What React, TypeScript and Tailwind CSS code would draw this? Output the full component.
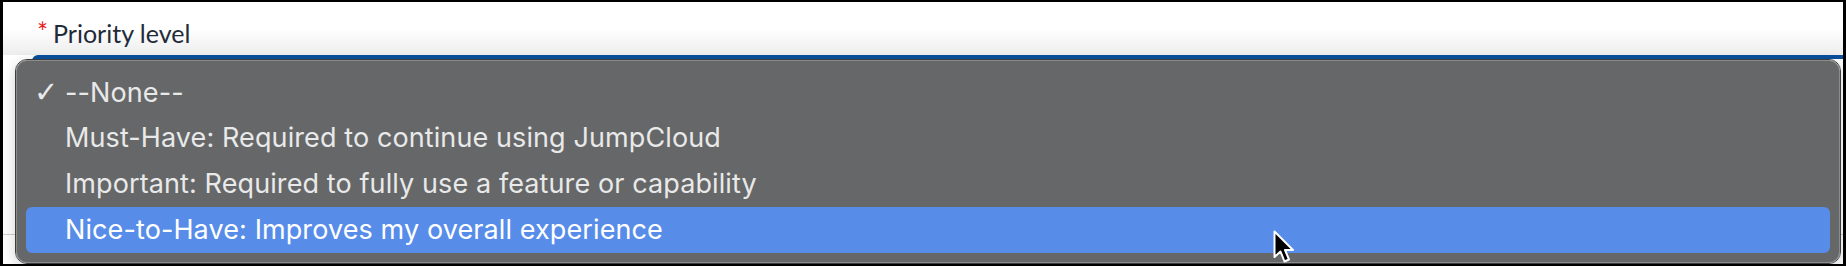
const options = [
  "--None--",
  "Must-Have: Required to continue using JumpCloud",
  "Important: Required to fully use a feature or capability",
  "Nice-to-Have: Improves my overall experience",
];

function Cursor() {
  return (
    <svg
      className="absolute left-[1270px] top-[228px]"
      width="24"
      height="36"
      viewBox="0 0 24 36"
    >
      <path
        d="M1.5 1.5 L1.5 27 L7.5 21.5 L11.5 31.5 L16 29.5 L12 20 L20 20 Z"
        fill="#000"
        stroke="#fff"
        strokeWidth="2"
        strokeLinejoin="round"
      />
    </svg>
  );
}

function OptionMenu({ selected, hovered }: { selected: number; hovered: number }) {
  return (
    <div className="absolute left-[12px] top-[57px] w-[1826px] h-[205px] rounded-[12px] border border-[#3c3c3c] shadow-[0_4px_14px_rgba(0,0,0,0.18)]">
      <div className="flex h-full w-full flex-col rounded-[11px] border border-[#8a8b8b] bg-[#656768] p-[9px] font-['Inter','Noto_Sans',sans-serif] text-[27px] tracking-[0.1px]">
        {options.map((o, i) => (
          <div
            key={o}
            className={
              i === hovered
                ? "flex h-[46px] items-center rounded-[6px] bg-[#578de9] text-white"
                : "flex h-[46px] items-center text-[#e9e9e9]"
            }
          >
            <span className="w-[39px] pl-[8px] font-['DejaVu_Sans',sans-serif] text-[29px] leading-none">
              {i === selected ? "✓" : ""}
            </span>
            <span>{o}</span>
          </div>
        ))}
      </div>
    </div>
  );
}

export default function App() {
  return (
    <div className="w-[1846px] h-[266px] bg-black pt-[2px] pl-[3px] pr-[3px] pb-[2px]">
      <div className="relative flex h-full w-full flex-col overflow-hidden bg-white">
        <div className="flex h-[53px] shrink-0 items-start gap-[5px] bg-gradient-to-b from-white from-50% to-[#ededed] pl-[34px] pt-[17px] font-['Lato','Noto_Sans',sans-serif] leading-none text-[#1f2b38]">
          <span className="text-[26px] text-[#e41b1b]">*</span>
          <span className="mt-[2px] text-[25px]">Priority level</span>
        </div>
        <div className="-mr-[4px] ml-[29px] h-[179px] shrink-0 rounded-tl-[6px] border-t-[4px] border-[#0a4f9e] bg-white" />
        <div className="h-[1px] shrink-0 bg-[#cfcfcf]" />

        <OptionMenu selected={0} hovered={3} />
        <Cursor />
      </div>
    </div>
  );
}
